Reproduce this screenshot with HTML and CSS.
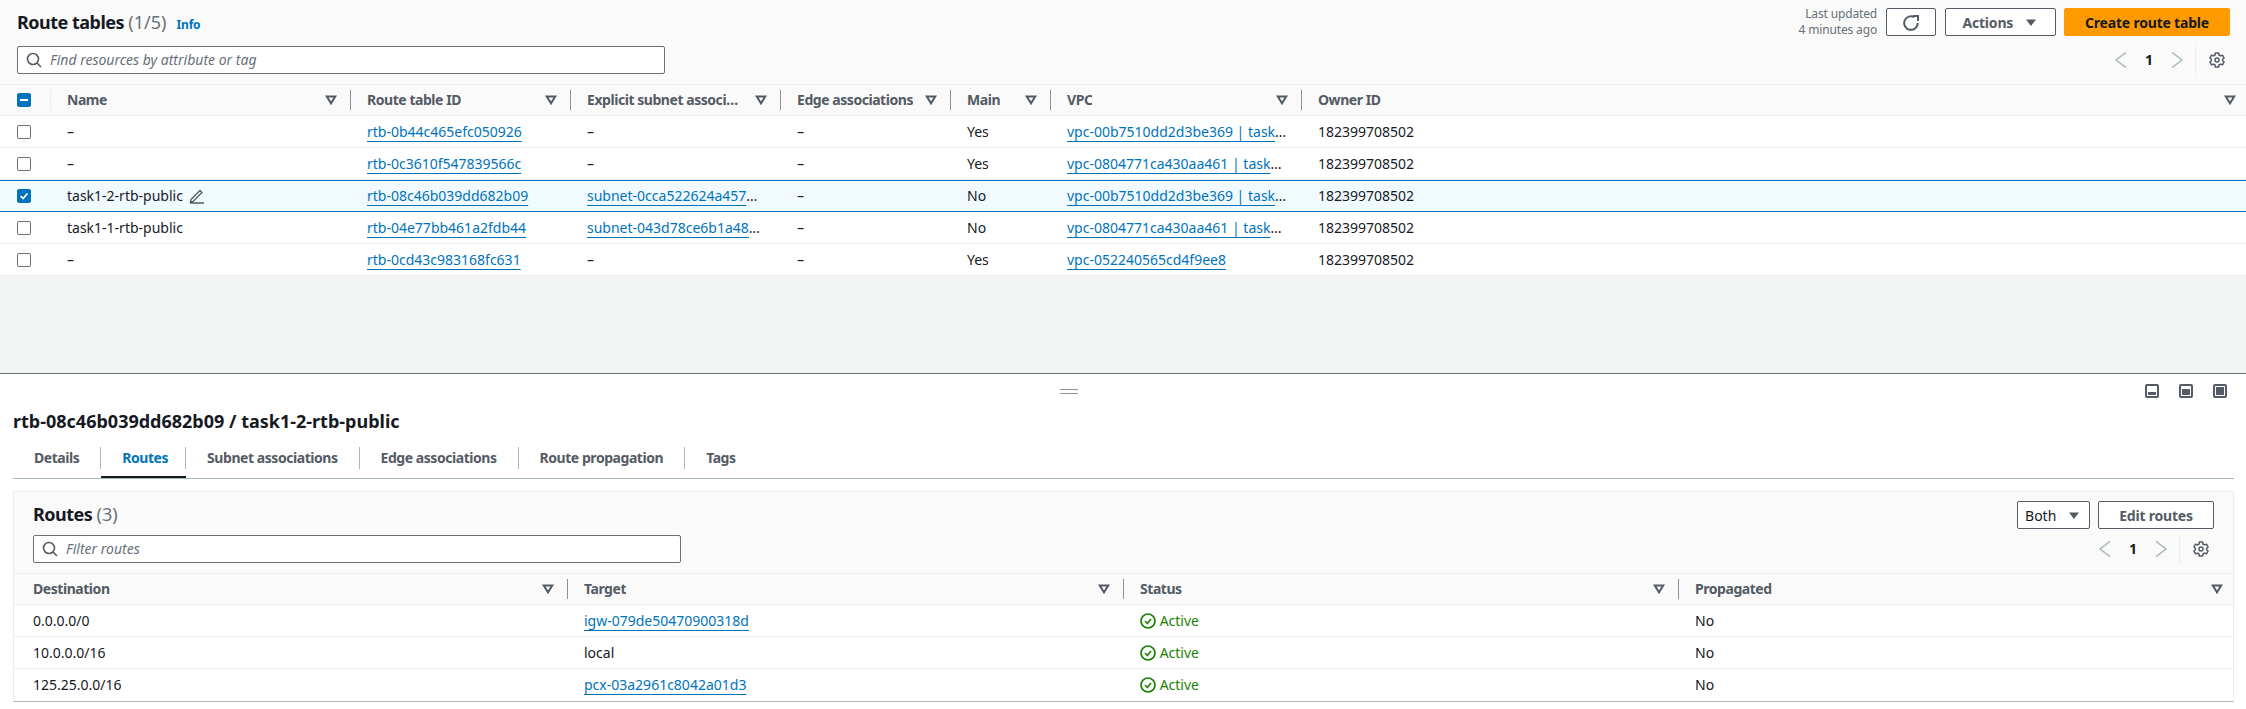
FILE: index.html
```html
<!DOCTYPE html>
<html lang="en">
<head>
    <meta charset="UTF-8">
    <title>Route tables</title>
    <link rel="stylesheet" href="styles.css">
</head>
<body>
    <svg class="defs" width="0" height="0">
        <symbol id="i-search" viewBox="0 0 16 16"><circle cx="7" cy="7" r="5.5" fill="none" stroke="currentColor" stroke-width="1.6"/><path d="M11 11l4 4" fill="none" stroke="currentColor" stroke-width="1.6"/></symbol>
        <symbol id="i-caret" viewBox="0 0 16 16"><path d="M3.8 4.6h8.4L8 11.4z" fill="none" stroke="currentColor" stroke-width="2"/></symbol>
        <symbol id="i-down" viewBox="0 0 16 16"><path d="M3 4.5h10L8 11z" fill="currentColor"/></symbol>
        <symbol id="i-left" viewBox="0 0 16 16"><path d="M13 .5L3 8l10 7.5" fill="none" stroke="currentColor" stroke-width="1.5"/></symbol>
        <symbol id="i-right" viewBox="0 0 16 16"><path d="M3 .5L13 8 3 15.500" fill="none" stroke="currentColor" stroke-width="1.5"/></symbol>
        <symbol id="i-gear" viewBox="0 0 16 16"><path d="M6.4 1h3.2l.4 2 1.5.9 2-.7 1.6 2.8-1.5 1.3v1.4l1.5 1.3-1.6 2.8-2-.7-1.5.9-.4 2H6.4l-.4-2-1.5-.9-2 .7L.9 10l1.5-1.3V7.300L.9 6l1.600-2.800 2 .7L6 3z" fill="none" stroke="currentColor" stroke-width="1.5" stroke-linejoin="round"/><circle cx="8" cy="8" r="2" fill="none" stroke="currentColor" stroke-width="1.5"/></symbol>
        <symbol id="i-refresh" viewBox="0 0 16 16"><path d="M14.800 8A6.800 6.800 0 1 1 11.500 2.200" fill="none" stroke="currentColor" stroke-width="2"/><path d="M10 1h5v5" fill="none" stroke="currentColor" stroke-width="2"/></symbol>
        <symbol id="i-pencil" viewBox="0 0 16 16"><path d="M2 11.500L11 2.500l2 2-9 9-2.500.500zM1 15h14" fill="none" stroke="currentColor" stroke-width="1.300"/></symbol>
        <symbol id="i-ok" viewBox="0 0 16 16"><circle cx="8" cy="8" r="7" fill="none" stroke="currentColor" stroke-width="1.700"/><path d="M5 8l2.300 2.500L11 6" fill="none" stroke="currentColor" stroke-width="1.700"/></symbol>
    </svg>

    <div class="top">
        <div class="head">
            <div>
                <h1 class="title">Route tables <span class="count">(1/5)</span> <a class="info">Info</a></h1>
                <div class="search"><svg class="ic"><use href="#i-search"/></svg><span>Find resources by attribute or tag</span></div>
            </div>
            <div class="head-right">
                <div class="actions">
                    <div class="updated">Last updated<br>4 minutes ago</div>
                    <button class="btn btn-refresh"><svg class="ic"><use href="#i-refresh"/></svg></button>
                    <button class="btn btn-actions">Actions <svg class="ic"><use href="#i-down"/></svg></button>
                    <button class="btn btn-primary">Create route table</button>
                </div>
                <div class="pager">
                    <svg class="ic off"><use href="#i-left"/></svg>
                    <span class="page-no">1</span>
                    <svg class="ic off"><use href="#i-right"/></svg>
                    <span class="pager-sep"></span>
                    <svg class="ic gear"><use href="#i-gear"/></svg>
                </div>
            </div>
        </div>

        <table class="grid grid-top">
            <colgroup>
                <col class="c-check"><col class="c-name"><col class="c-id"><col class="c-subnet"><col class="c-edge"><col class="c-main"><col class="c-vpc"><col>
            </colgroup>
            <thead>
                <tr>
                    <th class="check-cell"><div class="th-in th-faint"><span class="cb cb-mixed"></span></div></th>
                    <th><div class="th-in"><span class="th-text">Name</span><svg class="ic caret"><use href="#i-caret"/></svg></div></th>
                    <th><div class="th-in"><span class="th-text">Route table ID</span><svg class="ic caret"><use href="#i-caret"/></svg></div></th>
                    <th><div class="th-in"><span class="th-text th-subnet">Explicit subnet associations</span><svg class="ic caret"><use href="#i-caret"/></svg></div></th>
                    <th><div class="th-in"><span class="th-text">Edge associations</span><svg class="ic caret"><use href="#i-caret"/></svg></div></th>
                    <th><div class="th-in"><span class="th-text">Main</span><svg class="ic caret"><use href="#i-caret"/></svg></div></th>
                    <th><div class="th-in"><span class="th-text">VPC</span><svg class="ic caret"><use href="#i-caret"/></svg></div></th>
                    <th><div class="th-in th-last"><span class="th-text">Owner ID</span><svg class="ic caret"><use href="#i-caret"/></svg></div></th>
                </tr>
            </thead>
            <tbody>
                <tr>
                    <td class="check-cell"><span class="cb"></span></td>
                    <td>–</td>
                    <td><a>rtb-0b44c465efc050926</a></td>
                    <td>–</td>
                    <td>–</td>
                    <td>Yes</td>
                    <td class="vpc"><a>vpc-00b7510dd2d3be369 | task1-2-vpc</a></td>
                    <td>182399708502</td>
                </tr>
                <tr>
                    <td class="check-cell"><span class="cb"></span></td>
                    <td>–</td>
                    <td><a>rtb-0c3610f547839566c</a></td>
                    <td>–</td>
                    <td>–</td>
                    <td>Yes</td>
                    <td class="vpc"><a>vpc-0804771ca430aa461 | task1-1-vpc</a></td>
                    <td>182399708502</td>
                </tr>
                <tr class="selected">
                    <td class="check-cell"><span class="cb cb-on"><svg viewBox="0 0 14 14"><path d="M3 7l3 3 5-6" fill="none" stroke="#fff" stroke-width="2"/></svg></span></td>
                    <td>task1-2-rtb-public <svg class="ic pencil"><use href="#i-pencil"/></svg></td>
                    <td><a>rtb-08c46b039dd682b09</a></td>
                    <td><a>subnet-0cca522624a4577f1e</a></td>
                    <td>–</td>
                    <td>No</td>
                    <td class="vpc"><a>vpc-00b7510dd2d3be369 | task1-2-vpc</a></td>
                    <td>182399708502</td>
                </tr>
                <tr>
                    <td class="check-cell"><span class="cb"></span></td>
                    <td>task1-1-rtb-public</td>
                    <td><a>rtb-04e77bb461a2fdb44</a></td>
                    <td><a>subnet-043d78ce6b1a48c21</a></td>
                    <td>–</td>
                    <td>No</td>
                    <td class="vpc"><a>vpc-0804771ca430aa461 | task1-1-vpc</a></td>
                    <td>182399708502</td>
                </tr>
                <tr>
                    <td class="check-cell"><span class="cb"></span></td>
                    <td>–</td>
                    <td><a>rtb-0cd43c983168fc631</a></td>
                    <td>–</td>
                    <td>–</td>
                    <td>Yes</td>
                    <td class="vpc"><a>vpc-052240565cd4f9ee8</a></td>
                    <td>182399708502</td>
                </tr>
            </tbody>
        </table>
    </div>

    <div class="split">
        <div class="split-bar">
            <span class="handle"></span>
            <div class="modes">
                <span class="mode mode-low"></span>
                <span class="mode mode-mid"></span>
                <span class="mode mode-full"></span>
            </div>
        </div>
        <h2 class="detail-title">rtb-08c46b039dd682b09 / task1-2-rtb-public</h2>
        <div class="tabs">
            <div class="tab"><span>Details</span></div>
            <div class="tab active"><span>Routes</span></div>
            <div class="tab"><span>Subnet associations</span></div>
            <div class="tab"><span>Edge associations</span></div>
            <div class="tab"><span>Route propagation</span></div>
            <div class="tab last"><span>Tags</span></div>
        </div>

        <div class="card">
            <div class="card-head">
                <div>
                    <h3 class="title">Routes <span class="count">(3)</span></h3>
                    <div class="search"><svg class="ic"><use href="#i-search"/></svg><span>Filter routes</span></div>
                </div>
                <div class="head-right">
                    <div class="actions">
                        <button class="btn btn-both">Both <svg class="ic"><use href="#i-down"/></svg></button>
                        <button class="btn btn-edit">Edit routes</button>
                    </div>
                    <div class="pager">
                        <svg class="ic off"><use href="#i-left"/></svg>
                        <span class="page-no">1</span>
                        <svg class="ic off"><use href="#i-right"/></svg>
                        <span class="pager-sep"></span>
                        <svg class="ic gear"><use href="#i-gear"/></svg>
                    </div>
                </div>
            </div>
            <table class="grid grid-routes">
                <colgroup>
                    <col class="r-dest"><col class="r-target"><col class="r-status"><col>
                </colgroup>
                <thead>
                    <tr>
                        <th><div class="th-in th-first"><span class="th-text">Destination</span><svg class="ic caret"><use href="#i-caret"/></svg></div></th>
                        <th><div class="th-in"><span class="th-text">Target</span><svg class="ic caret"><use href="#i-caret"/></svg></div></th>
                        <th><div class="th-in"><span class="th-text">Status</span><svg class="ic caret"><use href="#i-caret"/></svg></div></th>
                        <th><div class="th-in th-last"><span class="th-text">Propagated</span><svg class="ic caret"><use href="#i-caret"/></svg></div></th>
                    </tr>
                </thead>
                <tbody>
                    <tr>
                        <td class="first">0.0.0.0/0</td>
                        <td><a>igw-079de50470900318d</a></td>
                        <td class="active-cell"><svg class="ic"><use href="#i-ok"/></svg> Active</td>
                        <td>No</td>
                    </tr>
                    <tr>
                        <td class="first">10.0.0.0/16</td>
                        <td>local</td>
                        <td class="active-cell"><svg class="ic"><use href="#i-ok"/></svg> Active</td>
                        <td>No</td>
                    </tr>
                    <tr>
                        <td class="first">125.25.0.0/16</td>
                        <td><a>pcx-03a2961c8042a01d3</a></td>
                        <td class="active-cell"><svg class="ic"><use href="#i-ok"/></svg> Active</td>
                        <td>No</td>
                    </tr>
                </tbody>
            </table>
        </div>
    </div>
</body>
</html>
```

FILE: styles.css
```css
* {
    box-sizing: border-box;
}
html, body {
    margin: 0;
    height: 709px;
    overflow: hidden;
}
body {
    font-family: "Noto Sans", Arial, sans-serif;
    font-size: 14px;
    line-height: 20px;
    color: #16191f;
    background-color: #fff;
}
.defs {
    position: absolute;
}
.ic {
    width: 16px;
    height: 16px;
    flex: none;
    vertical-align: -3px;
}
a {
    color: #0073bb;
    text-decoration: underline;
    text-decoration-thickness: 1px;
    text-underline-offset: 4px;
}

/* top pane */
.top {
    height: 374px;
    background-color: #f2f3f3;
    border-bottom: 1px solid #687078;
}
.head {
    height: 84px;
    padding: 8px 16px 0 17px;
    display: flex;
    justify-content: space-between;
    background-color: #fafafa;
}
.title {
    height: 22px;
    margin: 3px 0 13px;
    font-size: 18px;
    line-height: 22px;
    font-weight: 700;
    letter-spacing: -0.5px;
}
.count {
    font-weight: 400;
    letter-spacing: 0;
    color: #687078;
}
.info {
    margin-left: 6px;
    font-size: 12px;
    line-height: 16px;
    font-weight: 700;
    letter-spacing: -0.2px;
    text-decoration: none;
}
.search {
    width: 648px;
    height: 28px;
    padding-left: 8px;
    display: flex;
    align-items: center;
    gap: 8px;
    background-color: #fff;
    border: 1px solid #687078;
    border-radius: 2px;
    color: #687078;
    font-style: italic;
}
.search .ic {
    color: #545b64;
}
.head-right {
    display: flex;
    flex-direction: column;
    align-items: flex-end;
}
.actions {
    display: flex;
    align-items: center;
    gap: 8px;
    height: 28px;
}
.updated {
    margin-right: 1px;
    font-size: 12px;
    line-height: 16px;
    letter-spacing: -0.15px;
    color: #687078;
    text-align: right;
}
.btn {
    height: 28px;
    padding: 0;
    font-family: inherit;
    font-size: 14px;
    font-weight: 700;
    letter-spacing: -0.2px;
    color: #545b64;
    background-color: #fff;
    border: 1px solid #545b64;
    border-radius: 2px;
}
.btn-refresh {
    width: 50px;
}
.btn-actions {
    width: 111px;
    margin-left: 1px;
}
.btn-actions .ic {
    margin-left: 6px;
}
.btn-primary {
    width: 166px;
    color: #16191f;
    background-color: #ff9900;
    border-color: #ff9900;
}
.btn-both {
    width: 73px;
    font-weight: 400;
    letter-spacing: 0;
    color: #16191f;
}
.btn-both .ic {
    margin-left: 6px;
    color: #545b64;
}
.btn-edit {
    width: 116px;
}
.pager {
    margin-top: 10px;
    padding-right: 5px;
    height: 28px;
    display: flex;
    align-items: center;
}
.off {
    color: #aab7b8;
}
.page-no {
    width: 40px;
    text-align: center;
    font-weight: 700;
}
.pager-sep {
    width: 1px;
    height: 28px;
    margin-left: 10px;
    background-color: #eaeded;
}
.gear {
    margin-left: 13px;
    color: #545b64;
}

/* tables */
.grid {
    width: 100%;
    table-layout: fixed;
    border-collapse: separate;
    border-spacing: 0;
}
.grid th {
    height: 32px;
    padding: 0;
    background-color: #fafafa;
    border-top: 1px solid #eaeded;
    border-bottom: 1px solid #eaeded;
    font-weight: 700;
    letter-spacing: -0.45px;
    color: #545b64;
    text-align: left;
}
.th-in {
    height: 20px;
    padding: 0 11px 0 16px;
    display: flex;
    align-items: center;
    justify-content: space-between;
    border-right: 1px solid #879596;
}
.th-text {
    overflow: hidden;
    white-space: nowrap;
    text-overflow: ellipsis;
}
.th-subnet {
    max-width: 154px;
}
.th-faint {
    padding: 0 0 0 17px;
    border-right-color: #eaeded;
}
.th-last {
    padding-right: 8px;
    border-right: 0;
}
.th-first {
    padding-left: 19px;
}
.caret {
    color: #545b64;
    margin-left: 4px;
}
.grid td {
    height: 32px;
    padding: 0 16px;
    background-color: #fff;
    border-bottom: 1px solid #eaeded;
    overflow: hidden;
    white-space: nowrap;
    text-overflow: ellipsis;
}
.grid .first {
    padding-left: 19px;
}
.grid .vpc {
    padding-right: 14px;
}
.c-check {
    width: 51px;
}
.c-name {
    width: 300px;
}
.c-id {
    width: 220px;
}
.c-subnet {
    width: 210px;
}
.c-edge {
    width: 170px;
}
.c-main {
    width: 100px;
}
.c-vpc {
    width: 251px;
}
.grid .check-cell {
    padding: 0 0 0 17px;
}
.grid-top th.check-cell {
    padding: 0;
}
.cb {
    display: block;
    position: relative;
    width: 14px;
    height: 14px;
    background-color: #fff;
    border: 1px solid #687078;
    border-radius: 2px;
}
.cb-on, .cb-mixed {
    background-color: #0073bb;
    border-color: #0073bb;
}
.cb-on svg {
    display: block;
    width: 12px;
    height: 12px;
}
.cb-mixed::after {
    content: "";
    position: absolute;
    left: 2px;
    right: 2px;
    top: 5px;
    height: 2px;
    background-color: #fff;
}
.grid .selected td {
    background-color: #f1faff;
    border-bottom-color: #0073bb;
    box-shadow: inset 0 1px 0 #0073bb;
}
.pencil {
    margin-left: 2px;
    color: #545b64;
}

/* split panel */
.split-bar {
    height: 24px;
    padding: 10px 19px 0 1060px;
    display: flex;
    justify-content: space-between;
}
.handle {
    width: 18px;
    height: 5px;
    margin-top: 5px;
    border-top: 1px solid #879596;
    border-bottom: 1px solid #879596;
}
.modes {
    display: flex;
    gap: 20px;
}
.mode {
    position: relative;
    width: 14px;
    height: 14px;
    border: 2px solid #545b64;
    border-radius: 2px;
}
.mode::after {
    content: "";
    position: absolute;
    left: 1px;
    right: 1px;
    bottom: 1px;
    background-color: #545b64;
}
.mode-low::after {
    height: 3px;
}
.mode-mid::after {
    height: 6px;
}
.mode-full::after {
    height: 8px;
}
.detail-title {
    margin: 12px 0 15px 13px;
    font-size: 18px;
    line-height: 22px;
    font-weight: 700;
}
.tabs {
    margin: 0 12px 0 13px;
    height: 32px;
    display: flex;
    border-bottom: 1px solid #aab7b8;
}
.tab {
    height: 31px;
    font-weight: 700;
    letter-spacing: -0.45px;
    color: #545b64;
}
.tab span {
    display: block;
    height: 22px;
    line-height: 22px;
    padding: 0 21px;
    border-right: 1px solid #aab7b8;
}
.tab.last span {
    border-right: 0;
}
.tab.active {
    color: #0073bb;
    box-shadow: inset 0 -2px 0 #16191f;
}
.tab.active span {
    padding-right: 17px;
}
.card {
    margin: 12px 12px 0 13px;
    background-color: #fafafa;
    border: 1px solid #eaeded;
    border-bottom-color: #aab7b8;
    border-radius: 2px 2px 0 0;
}
.card-head {
    height: 81px;
    padding: 9px 19px 0 19px;
    display: flex;
    justify-content: space-between;
}
.card-head .title {
    margin: 2px 0 10px;
}
.card-head .pager {
    margin-top: 6px;
}
.r-dest {
    width: 554px;
}
.r-target {
    width: 556px;
}
.r-status {
    width: 555px;
}
.grid-routes tr:last-child td {
    border-bottom: 0;
}
.active-cell {
    color: #1d8102;
}
```
